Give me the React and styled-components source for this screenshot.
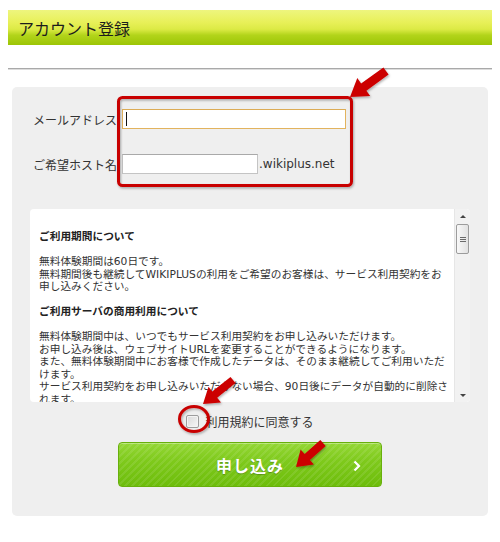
import React from "react";
import styled, { createGlobalStyle } from "styled-components";

const GlobalStyle = createGlobalStyle`
  html, body {
    margin: 0;
    padding: 0;
    background: #fff;
  }
  body {
    font-family: "DejaVu Sans", "Noto Sans CJK JP", sans-serif;
    color: #333;
  }
`;

const jp = `"DejaVu Sans", "Noto Sans CJK JP", sans-serif`;

// arrow polygon from tail (x1,y1) to tip (x2,y2)
const arrowPoints = (x1, y1, x2, y2, w = 4.5, hw = 11, hl = 17) => {
  const dx = x2 - x1;
  const dy = y2 - y1;
  const len = Math.hypot(dx, dy);
  const ux = dx / len;
  const uy = dy / len;
  const nx = -uy;
  const ny = ux;
  const bx = x2 - ux * hl;
  const by = y2 - uy * hl;
  const pts = [
    [x1 + nx * w, y1 + ny * w],
    [bx + nx * w, by + ny * w],
    [bx + nx * hw, by + ny * hw],
    [x2, y2],
    [bx - nx * hw, by - ny * hw],
    [bx - nx * w, by - ny * w],
    [x1 - nx * w, y1 - ny * w]
  ];
  return pts.map(p => p.map(v => v.toFixed(1)).join(",")).join(" ");
};

const App = () => {
  return (
    <Page>
      <GlobalStyle />
      <TitleBar>アカウント登録</TitleBar>
      <Divider />

      <Panel>
        <Fields>
          <FieldRow>
            <Label htmlFor="mail">メールアドレス</Label>
            <InputWrap>
              <TextInput id="mail" type="text" $width="224px" $focused />
              <Caret />
            </InputWrap>
          </FieldRow>
          <FieldRow>
            <Label htmlFor="host">ご希望ホスト名</Label>
            <TextInput id="host" type="text" $width="136px" />
            <Suffix>.wikiplus.net</Suffix>
          </FieldRow>
        </Fields>

        <TermsBox>
          <TermsText>
            <TermsHeading>ご利用期間について</TermsHeading>
            <TermsPara>
              無料体験期間は60日です。
              <br />
              無料期間後も継続してWIKIPLUSの利用をご希望のお客様は、サービス利用契約をお
              <br />
              申し込みください。
            </TermsPara>
            <TermsHeading>ご利用サーバの商用利用について</TermsHeading>
            <TermsPara>
              無料体験期間中は、いつでもサービス利用契約をお申し込みいただけます。
              <br />
              お申し込み後は、ウェブサイトURLを変更することができるようになります。
              <br />
              また、無料体験期間中にお客様で作成したデータは、そのまま継続してご利用いただ
              <br />
              けます。
              <br />
              サービス利用契約をお申し込みいただかない場合、90日後にデータが自動的に削除さ
              <br />
              れます。
            </TermsPara>
          </TermsText>
          <ScrollBar>
            <ScrollArrow>
              <Triangle />
            </ScrollArrow>
            <Thumb>
              <Grip />
            </Thumb>
            <ScrollSpacer />
            <ScrollArrow>
              <Triangle $down />
            </ScrollArrow>
          </ScrollBar>
        </TermsBox>

        <Agreement>
          <Checkbox type="checkbox" id="agree" />
          <AgreeLabel htmlFor="agree">利用規約に同意する</AgreeLabel>
        </Agreement>

        <SubmitButton type="button">
          申し込み
          <Chevron width="8" height="12" viewBox="0 0 8 12">
            <polyline
              points="1.5,1.5 6,6 1.5,10.5"
              fill="none"
              stroke="#fff"
              strokeWidth="2.2"
            />
          </Chevron>
        </SubmitButton>
      </Panel>

      <Annotations width="500" height="542" viewBox="0 0 500 542">
        <defs>
          <filter id="shadow" x="-20%" y="-20%" width="140%" height="140%">
            <feDropShadow
              dx="1"
              dy="1.5"
              stdDeviation="1"
              floodColor="#000"
              floodOpacity="0.3"
            />
          </filter>
        </defs>
        <g filter="url(#shadow)">
          <rect
            x="118.5"
            y="97.5"
            width="233"
            height="88"
            rx="4"
            fill="none"
            stroke="#c80000"
            strokeWidth="3"
          />
          <ellipse
            cx="194"
            cy="419"
            rx="14.5"
            ry="12.5"
            fill="none"
            stroke="#c80000"
            strokeWidth="3"
          />
          <polygon points={arrowPoints(386, 71, 350, 97)} fill="#cc0000" />
          <polygon
            points={arrowPoints(233, 380, 203, 404, 4, 10, 15)}
            fill="#cc0000"
          />
          <polygon
            points={arrowPoints(323, 443, 296, 467, 4, 10, 15)}
            fill="#cc0000"
          />
        </g>
      </Annotations>
    </Page>
  );
};

const Page = styled.div`
  position: relative;
  width: 500px;
  height: 542px;
  box-sizing: border-box;
  padding: 10px 8px 0;
  overflow: hidden;
`;

const TitleBar = styled.h1`
  margin: 0;
  height: 35px;
  display: flex;
  align-items: center;
  padding-left: 10px;
  font-family: "Noto Sans CJK JP", sans-serif;
  font-size: 16px;
  font-weight: normal;
  color: #1c1c1c;
  background: linear-gradient(
    #eef57e 0%,
    #e8f059 35%,
    #dcea45 55%,
    #b2d41a 72%,
    #9cc506 100%
  );
`;

const Divider = styled.div`
  margin-top: 23px;
  height: 2px;
  background: linear-gradient(#a9a9a9 50%, #dcdcdc 50%);
`;

const Panel = styled.div`
  margin: 17px 4px 0;
  padding: 22px 18px 29px;
  background: #efefef;
  border-radius: 5px;
`;

const Fields = styled.div`
  display: flex;
  flex-direction: column;
  gap: 25px;
  padding-left: 3px;
`;

const FieldRow = styled.div`
  display: flex;
  align-items: center;
  height: 20px;
`;

const Label = styled.label`
  width: 89px;
  flex: none;
  font-family: "Noto Sans CJK JP", sans-serif;
  font-size: 12px;
  color: #333;
  white-space: nowrap;
  overflow: hidden;
`;

const InputWrap = styled.div`
  position: relative;
  display: flex;
`;

const TextInput = styled.input`
  box-sizing: border-box;
  width: ${props => props.$width};
  height: 20px;
  margin: 0;
  padding: 0 4px;
  background: #fff;
  border: 1px solid ${props => (props.$focused ? "#e2b35e" : "#c4c4c4")};
  border-top-color: ${props => (props.$focused ? "#dcab55" : "#a9a9a9")};
  font-size: 12px;

  &:focus {
    outline: none;
  }
`;

const Caret = styled.span`
  position: absolute;
  left: 4px;
  top: 3px;
  width: 1px;
  height: 14px;
  background: #111;
`;

const Suffix = styled.span`
  margin-left: 1px;
  font-family: ${jp};
  font-size: 12px;
  color: #333;
`;

const TermsBox = styled.div`
  margin-top: 35px;
  height: 193px;
  display: flex;
  background: #fff;
  border-radius: 4px;
  overflow: hidden;
`;

const TermsText = styled.div`
  flex: 1;
  padding: 22px 0 0 9px;
  font-family: ${jp};
  font-size: 10.7px;
  line-height: 12.5px;
  color: #333;
  white-space: nowrap;
  overflow: hidden;
`;

const TermsHeading = styled.p`
  margin: 0 0 12.5px;
  font-weight: bold;
  color: #222;
`;

const TermsPara = styled.p`
  margin: 0 0 12.5px;
`;

const ScrollBar = styled.div`
  width: 15px;
  flex: none;
  display: flex;
  flex-direction: column;
  align-items: center;
  background: #f2f2f2;
  border-left: 1px solid #e6e6e6;
`;

const ScrollArrow = styled.div`
  height: 14px;
  width: 100%;
  display: flex;
  align-items: center;
  justify-content: center;
`;

const Triangle = styled.span`
  width: 0;
  height: 0;
  border-left: 3px solid transparent;
  border-right: 3px solid transparent;
  ${props =>
    props.$down
      ? "border-top: 3px solid #444;"
      : "border-bottom: 3px solid #444;"}
`;

const Thumb = styled.div`
  box-sizing: border-box;
  width: 13px;
  height: 30px;
  margin-top: 1px;
  display: flex;
  align-items: center;
  justify-content: center;
  border: 1px solid #9c9c9c;
  border-radius: 2px;
  background: linear-gradient(90deg, #f8f8f8, #e2e2e2);
`;

const Grip = styled.span`
  width: 6px;
  height: 5px;
  background: repeating-linear-gradient(#6a6a6a 0 1px, transparent 1px 2px);
`;

const ScrollSpacer = styled.div`
  flex: 1;
`;

const Agreement = styled.div`
  margin-top: 10px;
  height: 18px;
  display: flex;
  align-items: center;
  justify-content: center;
  gap: 6px;
`;

const Checkbox = styled.input`
  appearance: none;
  margin: 0;
  width: 13px;
  height: 13px;
  box-sizing: border-box;
  border: 1px solid #9d9d9d;
  border-radius: 2px;
  background: linear-gradient(135deg, #d9d9d9, #f7f7f7);
  box-shadow: inset 0 0 0 1px #f4f4f4;
`;

const AgreeLabel = styled.label`
  font-family: "Noto Sans CJK JP", sans-serif;
  font-size: 12px;
  color: #333;
`;

const SubmitButton = styled.button`
  position: relative;
  display: flex;
  align-items: center;
  justify-content: center;
  width: 264px;
  height: 45px;
  margin: 12px auto 0;
  padding: 0;
  border: 1px solid #68b00c;
  border-radius: 4px;
  font-family: "Noto Sans CJK JP", sans-serif;
  font-size: 16px;
  font-weight: bold;
  letter-spacing: 1px;
  color: #fff;
  text-shadow: 0 1px 1px rgba(0, 0, 0, 0.25);
  background:
    repeating-linear-gradient(
      -45deg,
      rgba(255, 255, 255, 0.09) 0 2px,
      transparent 2px 5px
    ),
    linear-gradient(#94d735 0%, #7fca1c 40%, #6dbd0b 100%);
  box-shadow: inset 0 1px 0 rgba(255, 255, 255, 0.35);
  cursor: pointer;
`;

const Chevron = styled.svg`
  position: absolute;
  right: 20px;
  top: 50%;
  margin-top: -5px;
`;

const Annotations = styled.svg`
  position: absolute;
  left: 0;
  top: 0;
  pointer-events: none;
`;

export default App;
